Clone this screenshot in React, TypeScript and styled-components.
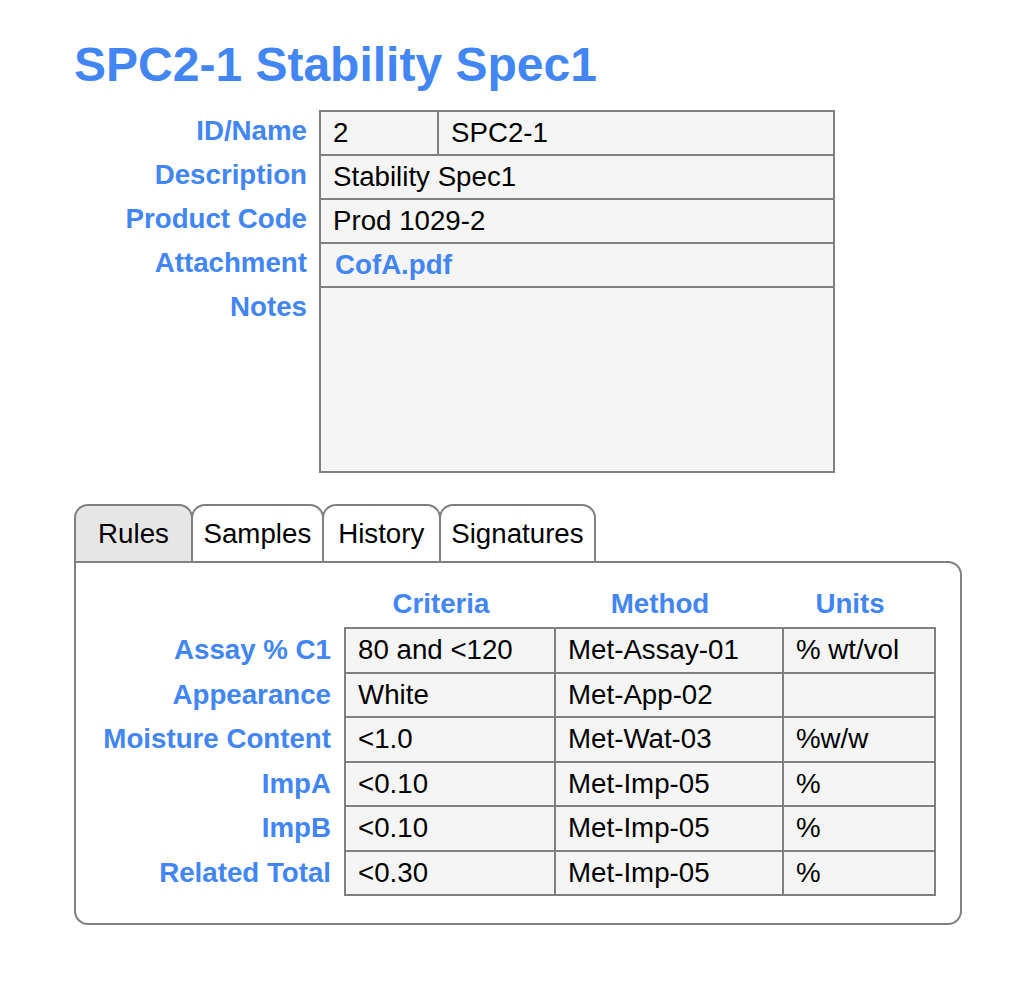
import React from "react";
import styled, { createGlobalStyle } from "styled-components";

const BLUE = "#4285f4";
const LINE = "#808080";
const CELL = "#f5f5f5";

const GlobalStyle = createGlobalStyle`
  body {
    margin: 0;
    background: #fff;
    font-family: "Liberation Sans", Arial, sans-serif;
    font-size: 27.7px;
    color: #000;
  }
`;

const Page = styled.div`
  padding: 37px 0 40px 74px;
`;

const Title = styled.h1`
  margin: 0 0 17px;
  font-size: 48px;
  line-height: 56px;
  font-weight: bold;
  color: ${BLUE};
`;

const FormTable = styled.table`
  border-collapse: collapse;
  table-layout: fixed;
  width: 760px;
`;

const Label = styled.th<{ $pad?: number; $top?: number }>`
  padding: ${(p) => p.$top ?? 4}px ${(p) => p.$pad ?? 12}px 6px 0;
  line-height: 32px;
  font-weight: bold;
  color: ${BLUE};
  text-align: right;
  vertical-align: top;
  white-space: nowrap;
`;

const Cell = styled.td<{ $tall?: boolean; $loose?: boolean }>`
  padding: 5px 12px ${(p) => (p.$tall ? 178 : p.$loose ? 5.5 : 5)}px;
  line-height: 32px;
  background: ${CELL};
  border: 2px solid ${LINE};
  vertical-align: top;
  white-space: nowrap;
`;

const FileLink = styled.a`
  color: ${BLUE};
  font-weight: bold;
  text-decoration: none;
  margin-left: 2px;
`;

const TabBar = styled.div`
  display: flex;
  margin-top: 31px;
`;

const Tab = styled.div<{ $active?: boolean }>`
  min-width: 119px;
  box-sizing: border-box;
  padding: 12px 10.5px 11px;
  margin-right: -2px;
  line-height: 32px;
  text-align: center;
  border: 2px solid ${LINE};
  border-bottom: none;
  border-radius: 14px 14px 0 0;
  background: ${(p) => (p.$active ? "#e6e6e6" : "#fff")};
`;

const Panel = styled.div`
  width: 888px;
  box-sizing: border-box;
  padding: 20px 25px 27px 20px;
  border: 2px solid ${LINE};
  border-radius: 0 14px 14px 14px;
`;

const RulesTable = styled.table`
  border-collapse: collapse;
  table-layout: fixed;
  width: 839px;
`;

const ColHead = styled.th`
  padding: 5px 18px 7px 0;
  line-height: 32px;
  font-weight: bold;
  color: ${BLUE};
  text-align: center;
`;

const rules = [
  ["Assay % C1", "80 and <120", "Met-Assay-01", "% wt/vol"],
  ["Appearance", "White", "Met-App-02", ""],
  ["Moisture Content", "<1.0", "Met-Wat-03", "%w/w"],
  ["ImpA", "<0.10", "Met-Imp-05", "%"],
  ["ImpB", "<0.10", "Met-Imp-05", "%"],
  ["Related Total", "<0.30", "Met-Imp-05", "%"],
];

export default function App() {
  return (
    <Page>
      <GlobalStyle />
      <Title>SPC2-1 Stability Spec1</Title>
      <FormTable>
        <colgroup>
          <col style={{ width: 246 }} />
          <col style={{ width: 118 }} />
          <col style={{ width: 396 }} />
        </colgroup>
        <tbody>
          <tr>
            <Label>ID/Name</Label>
            <Cell>2</Cell>
            <Cell>SPC2-1</Cell>
          </tr>
          <tr>
            <Label>Description</Label>
            <Cell colSpan={2}>Stability Spec1</Cell>
          </tr>
          <tr>
            <Label>Product Code</Label>
            <Cell colSpan={2}>Prod 1029-2</Cell>
          </tr>
          <tr>
            <Label>Attachment</Label>
            <Cell colSpan={2}>
              <FileLink href="#">CofA.pdf</FileLink>
            </Cell>
          </tr>
          <tr>
            <Label>Notes</Label>
            <Cell colSpan={2} $tall></Cell>
          </tr>
        </tbody>
      </FormTable>

      <TabBar>
        <Tab $active>Rules</Tab>
        <Tab>Samples</Tab>
        <Tab>History</Tab>
        <Tab>Signatures</Tab>
      </TabBar>
      <Panel>
        <RulesTable>
          <colgroup>
            <col style={{ width: 249 }} />
            <col style={{ width: 210 }} />
            <col style={{ width: 228 }} />
            <col style={{ width: 152 }} />
          </colgroup>
          <thead>
            <tr>
              <ColHead></ColHead>
              <ColHead>Criteria</ColHead>
              <ColHead>Method</ColHead>
              <ColHead>Units</ColHead>
            </tr>
          </thead>
          <tbody>
            {rules.map(([name, criteria, method, units]) => (
              <tr key={name}>
                <Label $pad={13} $top={6}>
                  {name}
                </Label>
                <Cell $loose>{criteria}</Cell>
                <Cell $loose>{method}</Cell>
                <Cell $loose>{units}</Cell>
              </tr>
            ))}
          </tbody>
        </RulesTable>
      </Panel>
    </Page>
  );
}
